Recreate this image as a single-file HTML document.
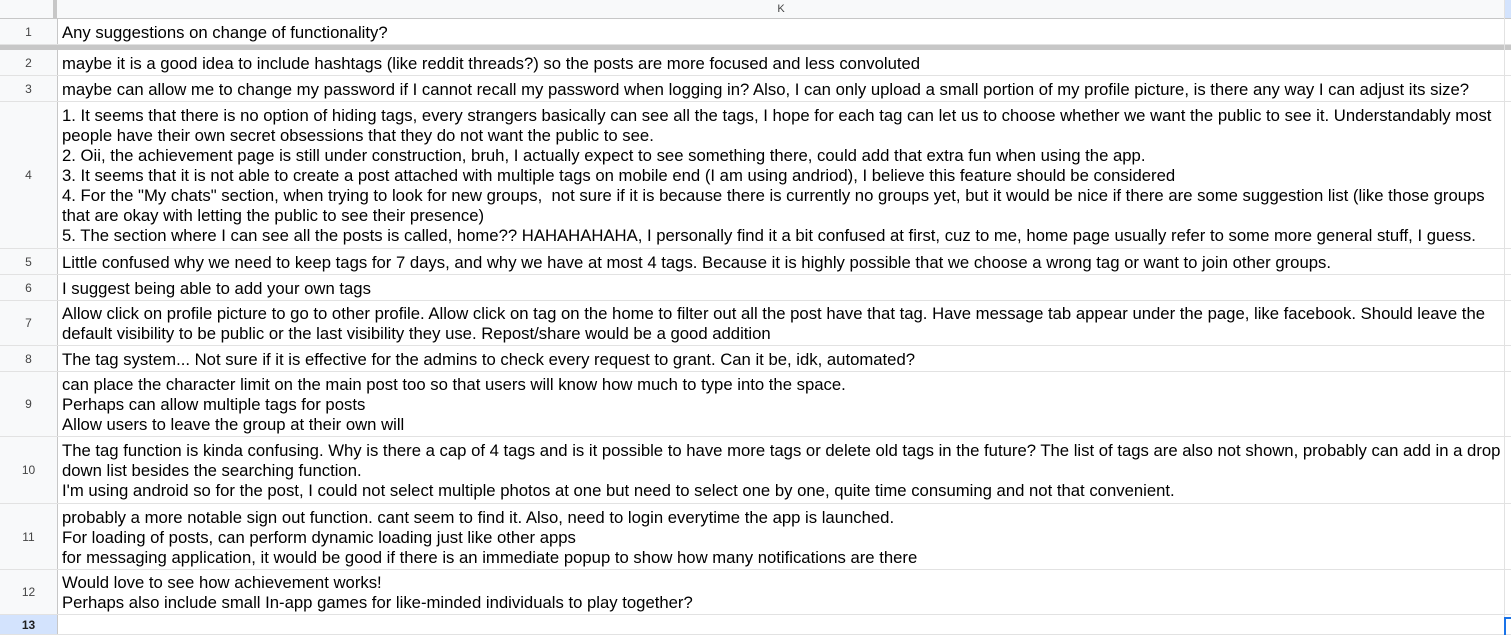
<!DOCTYPE html>
<html><head><style>
body{margin:0;width:1511px;height:635px;overflow:hidden;background:#fff;font-family:"Liberation Sans",Arial,sans-serif;position:relative}
.r{position:absolute;left:0;width:1511px;border-bottom:1px solid #e2e2e2;box-sizing:border-box}
.n{position:absolute;left:0;top:0;bottom:0;width:57px;background:#f8f9fa;border-right:1px solid #c7c7c7;font-size:12px;color:#444;display:flex;align-items:center;justify-content:center}
.c{position:absolute;left:62px;right:6px;top:2px;bottom:0;display:flex;flex-direction:column;justify-content:center;font-size:16.7px;line-height:20px;color:#000;white-space:nowrap;overflow:hidden}
.vl{position:absolute;left:1504px;top:0;width:1px;height:635px;background:#e2e2e2}
</style></head><body>
<div class="r" style="top:0;height:19px;background:#f8f9fa;border-bottom:1px solid #c7c7c7">
<div style="position:absolute;left:0;top:0;width:53px;height:19px;border-right:4px solid #c7c7c7"></div>
<div style="position:absolute;left:58px;width:1446px;top:0;height:18px;text-align:center;font-size:11px;color:#444;line-height:18px">K</div>
<div style="position:absolute;left:1505px;width:6px;top:0;height:18px;background:#d3e3fd"></div>
</div>
<div class="r" style="top:19px;height:26px"><div class="n">1</div><div class="c">Any suggestions on change of functionality?</div></div>
<div style="position:absolute;top:45px;left:0;width:1511px;height:5px;background:#c7c7c7"></div>
<div class="r" style="top:50px;height:26px"><div class="n">2</div><div class="c">maybe it is a good idea to include hashtags (like reddit threads?) so the posts are more focused and less convoluted</div></div>
<div class="r" style="top:76px;height:26px"><div class="n">3</div><div class="c">maybe can allow me to change my password if I cannot recall my password when logging in? Also, I can only upload a small portion of my profile picture, is there any way I can adjust its size?</div></div>
<div class="r" style="top:102px;height:147px"><div class="n">4</div><div class="c"><div>1. It seems that there is no option of hiding tags, every strangers basically can see all the tags, I hope for each tag can let us to choose whether we want the public to see it. Understandably most</div><div>people have their own secret obsessions that they do not want the public to see.</div><div>2. Oii, the achievement page is still under construction, bruh, I actually expect to see something there, could add that extra fun when using the app.</div><div>3. It seems that it is not able to create a post attached with multiple tags on mobile end (I am using andriod), I believe this feature should be considered</div><div>4. For the "My chats" section, when trying to look for new groups,&nbsp; not sure if it is because there is currently no groups yet, but it would be nice if there are some suggestion list (like those groups</div><div>that are okay with letting the public to see their presence)</div><div>5. The section where I can see all the posts is called, home?? HAHAHAHAHA, I personally find it a bit confused at first, cuz to me, home page usually refer to some more general stuff, I guess.</div></div></div>
<div class="r" style="top:249px;height:26px"><div class="n">5</div><div class="c">Little confused why we need to keep tags for 7 days, and why we have at most 4 tags. Because it is highly possible that we choose a wrong tag or want to join other groups.</div></div>
<div class="r" style="top:275px;height:26px"><div class="n">6</div><div class="c">I suggest being able to add your own tags</div></div>
<div class="r" style="top:301px;height:45px"><div class="n">7</div><div class="c"><div>Allow click on profile picture to go to other profile. Allow click on tag on the home to filter out all the post have that tag. Have message tab appear under the page, like facebook. Should leave the</div><div>default visibility to be public or the last visibility they use. Repost/share would be a good addition</div></div></div>
<div class="r" style="top:346px;height:26px"><div class="n">8</div><div class="c">The tag system... Not sure if it is effective for the admins to check every request to grant. Can it be, idk, automated?</div></div>
<div class="r" style="top:372px;height:65px"><div class="n">9</div><div class="c"><div>can place the character limit on the main post too so that users will know how much to type into the space.</div><div>Perhaps can allow multiple tags for posts</div><div>Allow users to leave the group at their own will</div></div></div>
<div class="r" style="top:437px;height:67px"><div class="n">10</div><div class="c"><div>The tag function is kinda confusing. Why is there a cap of 4 tags and is it possible to have more tags or delete old tags in the future? The list of tags are also not shown, probably can add in a drop</div><div>down list besides the searching function.</div><div>I'm using android so for the post, I could not select multiple photos at one but need to select one by one, quite time consuming and not that convenient.</div></div></div>
<div class="r" style="top:504px;height:66px"><div class="n">11</div><div class="c"><div>probably a more notable sign out function. cant seem to find it. Also, need to login everytime the app is launched.</div><div>For loading of posts, can perform dynamic loading just like other apps</div><div>for messaging application, it would be good if there is an immediate popup to show how many notifications are there</div></div></div>
<div class="r" style="top:570px;height:45px"><div class="n">12</div><div class="c"><div>Would love to see how achievement works!</div><div>Perhaps also include small In-app games for like-minded individuals to play together?</div></div></div>
<div class="r" style="top:615px;height:20px"><div class="n" style="background:#d3e3fd;color:#1f1f1f;font-weight:bold;font-size:12px">13</div></div>
<div class="vl"></div>
<div style="position:absolute;left:1504px;top:617px;width:7px;height:18px;border-left:2px solid #1a73e8;border-top:2px solid #1a73e8;box-sizing:border-box"></div>
</body></html>
